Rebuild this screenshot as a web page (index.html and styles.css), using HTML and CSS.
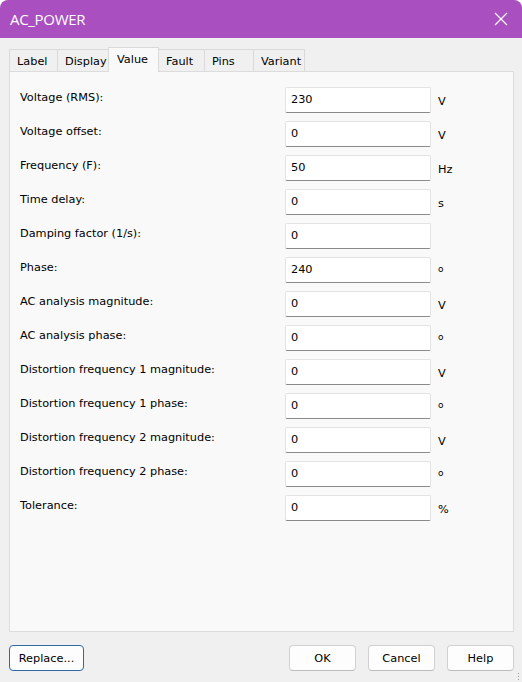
FILE: index.html
```html
<!DOCTYPE html>
<html>
<head>
<meta charset="utf-8">
<link rel="stylesheet" href="styles.css">
</head>
<body>
<div class="window">
  <div class="titlebar">
    <span class="title">AC_POWER</span>
    <svg class="close" width="14" height="14" viewBox="0 0 14 14"><path d="M1 1 L13 13 M13 1 L1 13" stroke="#fff" stroke-width="1.2" fill="none"/></svg>
  </div>
  <div class="tabs">
    <div class="tab w-label">Label</div>
    <div class="tab w-display">Display</div>
    <div class="tab sel w-value">Value</div>
    <div class="tab w-fault">Fault</div>
    <div class="tab w-pins">Pins</div>
    <div class="tab w-variant">Variant</div>
  </div>
  <div class="panel">
    <div class="row"><span class="lbl">Voltage (RMS):</span><div class="inp">230</div><span class="unit">V</span></div>
    <div class="row"><span class="lbl">Voltage offset:</span><div class="inp">0</div><span class="unit">V</span></div>
    <div class="row"><span class="lbl">Frequency (F):</span><div class="inp">50</div><span class="unit">Hz</span></div>
    <div class="row"><span class="lbl">Time delay:</span><div class="inp">0</div><span class="unit">s</span></div>
    <div class="row"><span class="lbl">Damping factor (1/s):</span><div class="inp">0</div><span class="unit"></span></div>
    <div class="row"><span class="lbl">Phase:</span><div class="inp">240</div><span class="unit deg">o</span></div>
    <div class="row"><span class="lbl">AC analysis magnitude:</span><div class="inp">0</div><span class="unit">V</span></div>
    <div class="row"><span class="lbl">AC analysis phase:</span><div class="inp">0</div><span class="unit deg">o</span></div>
    <div class="row"><span class="lbl">Distortion frequency 1 magnitude:</span><div class="inp">0</div><span class="unit">V</span></div>
    <div class="row"><span class="lbl">Distortion frequency 1 phase:</span><div class="inp">0</div><span class="unit deg">o</span></div>
    <div class="row"><span class="lbl">Distortion frequency 2 magnitude:</span><div class="inp">0</div><span class="unit">V</span></div>
    <div class="row"><span class="lbl">Distortion frequency 2 phase:</span><div class="inp">0</div><span class="unit deg">o</span></div>
    <div class="row"><span class="lbl">Tolerance:</span><div class="inp">0</div><span class="unit">%</span></div>
  </div>
  <div class="footer">
    <div class="btn replace">Replace...</div>
    <div class="spacer"></div>
    <div class="btn">OK</div>
    <div class="btn">Cancel</div>
    <div class="btn">Help</div>
  </div>
  <div class="grip"></div>
</div>
</body>
</html>
```
FILE: styles.css
```css
html, body {
  margin: 0;
  padding: 0;
  background: #ffffff;
}
.window {
  position: relative;
  width: 522px;
  height: 682px;
  background: #f0f0f0;
  border-radius: 8px 8px 0 0;
  overflow: hidden;
  font-family: "DejaVu Sans", sans-serif;
  font-size: 11.3px;
  color: #000;
}
.titlebar {
  height: 38px;
  background: #a94fbf;
  display: flex;
  align-items: center;
  justify-content: space-between;
  padding: 0 14px 0 10px;
}
.title {
  color: #fff;
  font-family: "Open Sans", "Noto Sans", sans-serif;
  font-size: 15px;
  letter-spacing: -0.3px;
}
.close { display: block; }
.tabs {
  display: flex;
  align-items: flex-end;
  height: 33px;
  padding-left: 9px;
  box-sizing: border-box;
}
.tab {
  height: 22px;
  box-sizing: border-box;
  border: 1px solid #dadada;
  border-bottom: none;
  margin-right: -1px;
  padding-left: 7px;
  line-height: 24px;
  background: #f0f0f0;
  font-size: 11.3px;
  color: #000;
}
.tab.sel {
  height: 25px;
  line-height: 24px;
  background: #f9f9f9;
  margin-bottom: -1px;
  padding-left: 8px;
  position: relative;
  z-index: 1;
}
.w-label { width: 49px; }
.w-display { width: 52px; }
.w-value { width: 51px; }
.w-fault { width: 47px; }
.w-pins { width: 50px; }
.w-variant { width: 52px; }
.panel {
  margin: 0 8px 0 9px;
  height: 561px;
  box-sizing: border-box;
  background: #f9f9f9;
  border: 1px solid #dcdcdc;
  padding: 15px 0 0 10px;
  display: flex;
  flex-direction: column;
}
.row {
  display: flex;
  align-items: center;
  height: 26px;
  margin-bottom: 8px;
}
.lbl {
  width: 265px;
  flex: none;
  position: relative;
  top: -3px;
}
.inp {
  width: 146px;
  height: 26px;
  box-sizing: border-box;
  background: #fff;
  border: 1px solid #e3e3e3;
  border-bottom: 1px solid #8a8a8a;
  border-radius: 2px;
  padding: 0 0 2px 5px;
  display: flex;
  align-items: center;
}
.unit {
  margin-left: 7px;
  position: relative;
  top: 1px;
}
.unit.deg {
  font-size: 9px;
  top: -1px;
}
.footer {
  display: flex;
  padding: 13px 8px 0 9px;
  gap: 12px;
}
.spacer { flex: 1; }
.btn {
  width: 67px;
  height: 26px;
  box-sizing: border-box;
  background: #fdfdfd;
  border: 1px solid #d0d0d0;
  border-bottom-color: #bcbcbc;
  border-radius: 4px;
  display: flex;
  align-items: center;
  justify-content: center;
}
.btn.replace {
  width: 75px;
  border: 1px solid #2f6aa6;
}
.grip {
  position: absolute;
  right: 2px;
  bottom: 2px;
  width: 3px;
  height: 8px;
  background: radial-gradient(circle, #9a9a9a 0.8px, transparent 1px) 0 0 / 3px 3px;
}
```
